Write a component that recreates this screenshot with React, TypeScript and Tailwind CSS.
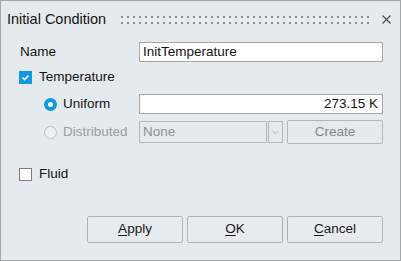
import React from 'react';

const Check = () => (
  <svg width="9" height="9" viewBox="0 0 9 9" fill="none">
    <path d="M1.5 4.6 L3.6 6.6 L7.6 2.4" stroke="white" strokeWidth="1.5" />
  </svg>
);

const Radio = ({ checked, disabled }: { checked?: boolean; disabled?: boolean }) =>
  checked ? (
    <span className="w-[13px] h-[13px] rounded-full bg-[#119ae0] flex items-center justify-center">
      <span className="w-[5px] h-[5px] rounded-full bg-white" />
    </span>
  ) : (
    <span
      className={`w-[13px] h-[13px] rounded-full border ${
        disabled ? 'border-[#b9bdc0] bg-[#eef1f3]' : 'border-[#7a7a7a] bg-white'
      }`}
    />
  );

const Button = ({ mnemonic, rest }: { mnemonic: string; rest: string }) => (
  <button className="w-[96px] h-[27px] border border-[#aeb3b7] rounded-[2px] bg-[#e6ebef] text-[13.5px] text-[#1a1a1a] flex items-center justify-center">
    <span>
      <span className="underline underline-offset-2">{mnemonic}</span>
      {rest}
    </span>
  </button>
);

export default function App() {
  return (
    <div
      className="w-[401px] h-[261px] border border-[#a2a7ab] bg-[#e4eaee] flex flex-col text-[13.5px] text-[#141414]"
      style={{ fontFamily: '"Liberation Sans", Arial, sans-serif' }}
    >
      {/* title bar */}
      <div className="h-[37px] flex items-center pl-[6px] pr-[9px]">
        <span className="text-[14.5px] w-[114px]">Initial Condition</span>
        <svg width="248" height="8" className="mt-[1px]">
          <defs>
            <pattern id="grip" width="6" height="6" patternUnits="userSpaceOnUse">
              <rect x="0" y="0" width="2" height="2" fill="#8c8f92" />
            </pattern>
          </defs>
          <rect width="248" height="8" fill="url(#grip)" />
        </svg>
        <svg width="9" height="9" viewBox="0 0 9 9" className="ml-auto">
          <path d="M0.5 0.5 L8.5 8.5 M8.5 0.5 L0.5 8.5" stroke="#4a4a4a" strokeWidth="1.1" />
        </svg>
      </div>

      <div className="flex flex-col pl-[18px] pr-[17px]">
        {/* name */}
        <div className="mt-[4px] h-[20px] flex items-center">
          <span className="pl-[1px] w-[120px]">Name</span>
          <input
            className="flex-1 h-[20px] border border-[#a9a9a9] bg-white px-[3px] text-[13.5px] outline-none"
            defaultValue="InitTemperature"
          />
        </div>

        {/* temperature */}
        <div className="mt-[5px] h-[20px] flex items-center gap-[7px]">
          <span className="w-[13px] h-[13px] bg-[#119ae0] flex items-center justify-center">
            <Check />
          </span>
          <span>Temperature</span>
        </div>

        {/* uniform */}
        <div className="mt-[7px] h-[20px] flex items-center">
          <div className="w-[120px] pl-[25px] flex items-center gap-[6px]">
            <Radio checked />
            <span>Uniform</span>
          </div>
          <input
            className="flex-1 h-[20px] border border-[#a9a9a9] bg-white px-[4px] text-right text-[13.5px] outline-none"
            defaultValue="273.15 K"
          />
        </div>

        {/* distributed */}
        <div className="mt-[6px] h-[24px] flex items-center">
          <div className="w-[120px] pl-[25px] flex items-center gap-[6px] text-[#9a9ea2]">
            <Radio disabled />
            <span>Distributed</span>
          </div>
          <div className="h-[22px] w-[128px] border border-[#b4b8bb] flex items-center px-[3px] text-[#8e9296]">
            None
          </div>
          <div className="ml-[1px] h-[22px] w-[15px] border border-[#b4b8bb] flex items-center justify-center">
            <svg width="7" height="5" viewBox="0 0 7 5">
              <path d="M0.8 1 L3.5 3.7 L6.2 1" stroke="#b0b4b7" strokeWidth="1" fill="none" />
            </svg>
          </div>
          <button className="ml-auto h-[24px] w-[96px] border border-[#b4b8bb] rounded-[2px] text-[#83878b] text-[13.5px]">
            Create
          </button>
        </div>

        {/* fluid */}
        <div className="mt-[20px] h-[20px] flex items-center gap-[7px]">
          <span className="w-[13px] h-[13px] border border-[#7f7f7f] bg-white" />
          <span>Fluid</span>
        </div>

        {/* buttons */}
        <div className="mt-[32px] flex justify-end gap-[4px]">
          <Button mnemonic="A" rest="pply" />
          <Button mnemonic="O" rest="K" />
          <Button mnemonic="C" rest="ancel" />
        </div>
      </div>
    </div>
  );
}
